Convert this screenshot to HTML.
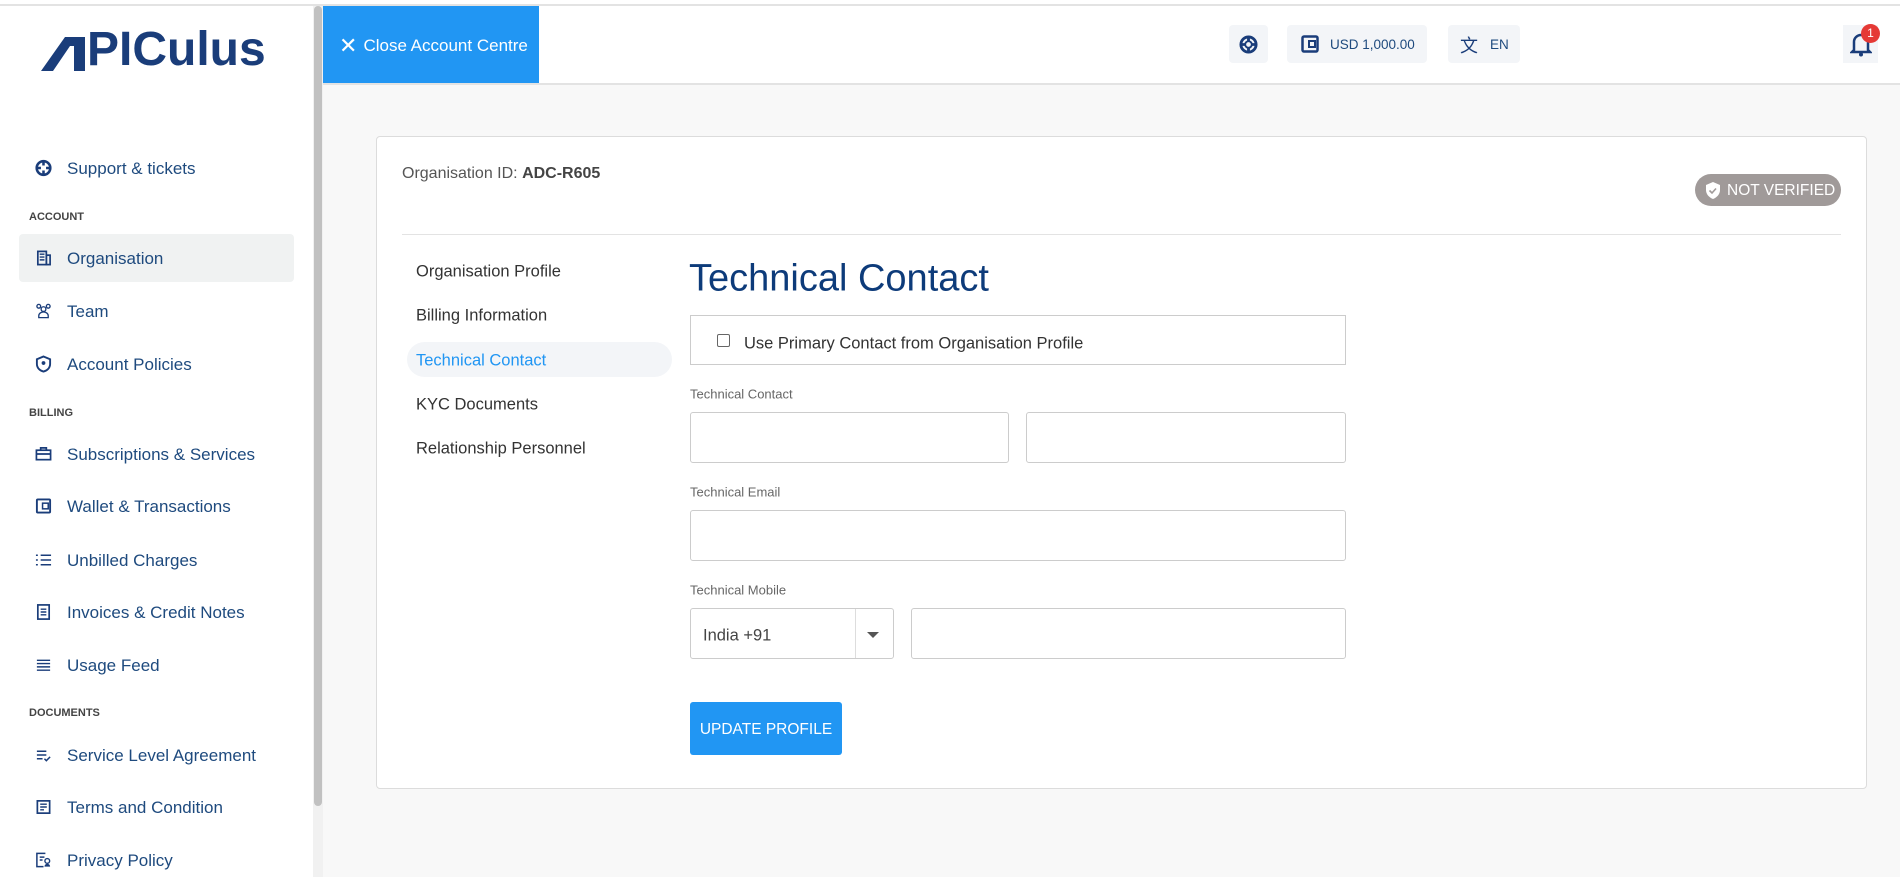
<!DOCTYPE html>
<html><head><meta charset="utf-8"><style>
*{box-sizing:border-box;margin:0;padding:0}
body{width:1900px;height:877px;overflow:hidden;background:#f8f8f8;font-family:"Liberation Sans",sans-serif;position:relative}
.a{position:absolute}
.side{left:0;top:6px;width:313px;height:871px;background:#fff}
.sb{left:313px;top:6px;width:10px;height:871px;background:#f1f1f1}
.sbt{left:314px;top:6px;width:8px;height:800px;background:#c1c1c1;border-radius:4px}
.it{left:67px;font-size:17px;color:#1e4a7e;transform:translateY(-40%);white-space:nowrap}
.ic{left:35px;width:17px;height:17px;transform:translateY(-50%)}
.sec{left:29px;font-size:11px;font-weight:bold;color:#444;transform:translateY(-40%)}
.nav{left:416px;font-size:16.5px;color:#333;transform:translateY(-40%);white-space:nowrap}
.lbl{left:690px;font-size:13px;color:#666;transform:translateY(-45%)}
.inp{background:#fff;border:1px solid #ccc;border-radius:3px}
.hb{background:#f3f5f8;border-radius:4px;top:25px;height:38px}
</style></head><body>
<div class="a" style="left:0;top:0;width:1900px;height:4px;background:#fff"></div>
<div class="a" style="left:0;top:4px;width:1900px;height:2px;background:#e3e3e3"></div>
<div class="a side"></div>
<div class="a sb"></div><div class="a sbt"></div>
<!-- logo -->
<svg class="a" style="left:41px;top:37px" width="48" height="35" viewBox="0 0 48 35"><polygon points="0,34 24,0 44,0 44,34 33,34 33,9 29,9 12,34" fill="#1a3d7a"/></svg>
<div class="a" style="left:87px;top:22px;font-size:48px;font-weight:bold;color:#1a3d7a;letter-spacing:0px;line-height:56px;transform:scaleX(1.0);transform-origin:left">PICulus</div>
<!-- header -->
<div class="a" style="left:323px;top:6px;width:1577px;height:77px;background:#fff"></div>
<div class="a" style="left:323px;top:83px;width:1577px;height:2px;background:#e3e3e3"></div>
<div class="a" style="left:323px;top:6px;width:216px;height:77px;background:#2196f3;color:#fff;font-size:17px;line-height:79px;padding-left:16px;white-space:nowrap"><span style="font-size:22px;vertical-align:-2px;margin-right:6px">✕</span>Close Account Centre</div>
<div class="a hb" style="left:1229px;width:39px"><svg class="a" style="left:10px;top:10px" width="19" height="19" viewBox="0 0 20 20"><circle cx="10" cy="10" r="8" fill="none" stroke="#1a3d7a" stroke-width="3"/><circle cx="10" cy="10" r="3.5" fill="none" stroke="#1a3d7a" stroke-width="2"/><path d="M10 2v5M10 13v5M2 10h5M13 10h5" stroke="#1a3d7a" stroke-width="3"/></svg></div>
<div class="a hb" style="left:1287px;width:140px"><svg class="a" style="left:14px;top:10px" width="18" height="18" viewBox="0 0 18 18"><rect x="1.5" y="1.5" width="15" height="15" rx="1.5" fill="none" stroke="#1a3d7a" stroke-width="2.5"/><rect x="8" y="6" width="6" height="6" fill="none" stroke="#1a3d7a" stroke-width="2"/></svg><span class="a" style="left:43px;top:12px;font-size:13.5px;color:#1e4a7e">USD 1,000.00</span></div>
<div class="a hb" style="left:1448px;width:72px"><span class="a" style="left:12px;top:7px;font-size:18px;color:#1a3d7a;font-family:'Noto Sans CJK SC',sans-serif">文</span><span class="a" style="left:42px;top:12px;font-size:13.5px;color:#1e4a7e">EN</span></div>
<div class="a" style="left:1843px;top:25px;width:35px;height:38px;background:#f3f5f8"></div>
<svg class="a" style="left:1850px;top:31px" width="22" height="26" viewBox="0 0 22 26"><path d="M4 19V11a7 7 0 0 1 14 0v8l2 2H2z" fill="none" stroke="#1a3d7a" stroke-width="2.5"/><circle cx="11" cy="23.5" r="2" fill="#1a3d7a"/></svg>
<div class="a" style="left:1861px;top:24px;width:19px;height:19px;border-radius:50%;background:#e53935;color:#fff;font-size:12px;text-align:center;line-height:19px">1</div>
<!-- sidebar items -->
<svg class="a ic" style="top:168px" viewBox="0 0 20 20"><circle cx="10" cy="10" r="8" fill="none" stroke="#1a3d7a" stroke-width="3"/><path d="M10 2v5M10 13v5M2 10h5M13 10h5" stroke="#1a3d7a" stroke-width="3"/></svg>
<div class="a it" style="top:167px">Support &amp; tickets</div>
<div class="a sec" style="top:216px">ACCOUNT</div>
<div class="a" style="left:19px;top:234px;width:275px;height:48px;background:#f0f2f2;border-radius:4px"></div>
<svg class="a ic" style="top:258px" viewBox="0 0 18 18"><rect x="3" y="2" width="9" height="14" fill="none" stroke="#1a3d7a" stroke-width="1.8"/><rect x="12" y="6" width="4" height="10" fill="none" stroke="#1a3d7a" stroke-width="1.8"/><path d="M5 5h5M5 8h5M5 11h5" stroke="#1a3d7a" stroke-width="1.5"/></svg>
<div class="a it" style="top:257px">Organisation</div>
<svg class="a ic" style="top:311px" viewBox="0 0 18 18"><circle cx="9" cy="7" r="2.5" fill="none" stroke="#1a3d7a" stroke-width="1.4"/><circle cx="4" cy="4" r="2" fill="none" stroke="#1a3d7a" stroke-width="1.4"/><circle cx="14" cy="4" r="2" fill="none" stroke="#1a3d7a" stroke-width="1.4"/><path d="M4 16v-2a5 4 0 0 1 10 0v2z" fill="none" stroke="#1a3d7a" stroke-width="1.4"/></svg>
<div class="a it" style="top:310px">Team</div>
<svg class="a ic" style="top:364px" viewBox="0 0 18 18"><path d="M9 1l7 3v5c0 4-3 7-7 8-4-1-7-4-7-8V4z" fill="none" stroke="#1a3d7a" stroke-width="2"/><circle cx="9" cy="8" r="2" fill="#1a3d7a"/></svg>
<div class="a it" style="top:363px">Account Policies</div>
<div class="a sec" style="top:412px">BILLING</div>
<svg class="a ic" style="top:454px" viewBox="0 0 18 18"><rect x="1.5" y="5" width="15" height="10" fill="none" stroke="#1a3d7a" stroke-width="1.8"/><path d="M6 5V2.5h6V5M1.5 9h15" stroke="#1a3d7a" stroke-width="1.8" fill="none"/></svg>
<div class="a it" style="top:453px">Subscriptions &amp; Services</div>
<svg class="a ic" style="top:506px" viewBox="0 0 18 18"><rect x="2" y="2" width="14" height="14" rx="1" fill="none" stroke="#1a3d7a" stroke-width="2"/><rect x="8" y="6" width="6" height="6" fill="none" stroke="#1a3d7a" stroke-width="1.6"/></svg>
<div class="a it" style="top:505px">Wallet &amp; Transactions</div>
<svg class="a ic" style="top:560px" viewBox="0 0 18 18"><path d="M1 4h2M1 9h2M1 14h2M6 4h11M6 9h11M6 14h11" stroke="#1a3d7a" stroke-width="1.6"/></svg>
<div class="a it" style="top:559px">Unbilled Charges</div>
<svg class="a ic" style="top:612px" viewBox="0 0 18 18"><rect x="3" y="1.5" width="12" height="15" fill="none" stroke="#1a3d7a" stroke-width="1.8"/><path d="M6 6h6M6 9h6M6 12h6" stroke="#1a3d7a" stroke-width="1.5"/></svg>
<div class="a it" style="top:611px">Invoices &amp; Credit Notes</div>
<svg class="a ic" style="top:665px" viewBox="0 0 18 18"><path d="M2 4h14M2 7.5h14M2 11h14M2 14.5h14" stroke="#1a3d7a" stroke-width="1.5"/></svg>
<div class="a it" style="top:664px">Usage Feed</div>
<div class="a sec" style="top:712px">DOCUMENTS</div>
<svg class="a ic" style="top:755px" viewBox="0 0 18 18"><path d="M2 5h10M2 9h10M2 13h6M10 13l2 2 4-4" stroke="#1a3d7a" stroke-width="1.6" fill="none"/></svg>
<div class="a it" style="top:754px">Service Level Agreement</div>
<svg class="a ic" style="top:807px" viewBox="0 0 18 18"><rect x="2.5" y="2.5" width="13" height="13" fill="none" stroke="#1a3d7a" stroke-width="1.8"/><path d="M5.5 6h7M5.5 9h7M5.5 12h4" stroke="#1a3d7a" stroke-width="1.5"/></svg>
<div class="a it" style="top:806px">Terms and Condition</div>
<svg class="a ic" style="top:860px" viewBox="0 0 18 18"><path d="M11 2H2v14h7M5 6h5M5 9h3" stroke="#1a3d7a" stroke-width="1.6" fill="none"/><circle cx="13" cy="10" r="2.5" fill="none" stroke="#1a3d7a" stroke-width="1.5"/><path d="M10 16a3 3 0 0 1 6 0z" fill="#1a3d7a"/></svg>
<div class="a it" style="top:859px">Privacy Policy</div>
<!-- card -->
<div class="a" style="left:376px;top:136px;width:1491px;height:653px;background:#fff;border:1px solid #dcdcdc;border-radius:4px"></div>
<div class="a" style="left:402px;top:172px;transform:translateY(-40%);font-size:16px;color:#555">Organisation ID: <b style="color:#444">ADC-R605</b></div>
<div class="a" style="left:1695px;top:174px;width:146px;height:32px;border-radius:16px;background:#a09a99;color:#fff;font-size:15.5px;line-height:34px;padding-left:32px;white-space:nowrap">NOT VERIFIED</div>
<svg class="a" style="left:1705px;top:182px" width="16" height="17" viewBox="0 0 16 17"><path d="M8 0l7 3v5c0 4-3 7.5-7 9-4-1.5-7-5-7-9V3z" fill="#fff"/><path d="M4.5 8.5l2.5 2.5 4-4.5" stroke="#a09a99" stroke-width="1.6" fill="none"/></svg>
<div class="a" style="left:402px;top:234px;width:1439px;height:1px;background:#e3e3e3"></div>
<div class="a nav" style="top:270px">Organisation Profile</div>
<div class="a nav" style="top:314px">Billing Information</div>
<div class="a" style="left:407px;top:342px;width:265px;height:35px;background:#f3f5f8;border-radius:18px"></div>
<div class="a nav" style="top:359px;color:#2196f3">Technical Contact</div>
<div class="a nav" style="top:403px">KYC Documents</div>
<div class="a nav" style="top:447px">Relationship Personnel</div>
<div class="a" style="left:689px;top:277px;transform:translateY(-45%);font-size:38px;color:#0d3b7a;white-space:nowrap">Technical Contact</div>
<div class="a" style="left:690px;top:315px;width:656px;height:50px;border:1px solid #ccc;background:#fff"></div>
<div class="a" style="left:717px;top:334px;width:13px;height:13px;border:1px solid #666;border-radius:2px"></div>
<div class="a" style="left:744px;top:342px;transform:translateY(-40%);font-size:16.5px;color:#333;white-space:nowrap">Use Primary Contact from Organisation Profile</div>
<div class="a lbl" style="top:393px">Technical Contact</div>
<div class="a inp" style="left:690px;top:412px;width:319px;height:51px"></div>
<div class="a inp" style="left:1026px;top:412px;width:320px;height:51px"></div>
<div class="a lbl" style="top:491px">Technical Email</div>
<div class="a inp" style="left:690px;top:510px;width:656px;height:51px"></div>
<div class="a lbl" style="top:589px">Technical Mobile</div>
<div class="a inp" style="left:690px;top:608px;width:204px;height:51px"></div>
<div class="a" style="left:855px;top:609px;width:1px;height:49px;background:#ddd"></div>
<div class="a" style="left:703px;top:634px;transform:translateY(-40%);font-size:16.5px;color:#444">India +91</div>
<div class="a" style="left:867px;top:632px;width:0;height:0;border-left:6px solid transparent;border-right:6px solid transparent;border-top:6px solid #555"></div>
<div class="a inp" style="left:911px;top:608px;width:435px;height:51px"></div>
<div class="a" style="left:690px;top:702px;width:152px;height:53px;background:#2196f3;border-radius:3px;color:#fff;font-size:15.5px;line-height:55px;text-align:center">UPDATE PROFILE</div>
</body></html>
